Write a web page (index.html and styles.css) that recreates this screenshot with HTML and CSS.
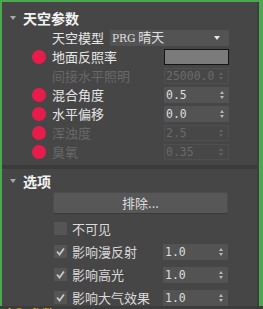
FILE: index.html
```html
<!DOCTYPE html>
<html lang="zh">
<head>
<meta charset="utf-8">
<link rel="stylesheet" href="styles.css">
</head>
<body>
<div class="frame">
  <div class="panel">
    <section class="rollout first">
      <div class="rhead"><span class="tri"></span><span>天空参数</span></div>
      <div class="row">
        <span class="nodot"></span><span class="label">天空模型</span>
        <div class="dropdown"><span class="ddtext"><span class="latin">PRG</span> 晴天</span><span class="ddarrow"></span></div>
      </div>
      <div class="row">
        <span class="dot"></span><span class="label">地面反照率</span>
        <div class="swatch"></div>
      </div>
      <div class="row">
        <span class="nodot"></span><span class="label off">间接水平照明</span>
        <div class="field off"><span class="num">25000.0</span><span class="spin"><i class="up"></i><i class="down"></i></span></div>
      </div>
      <div class="row">
        <span class="dot"></span><span class="label">混合角度</span>
        <div class="field"><span class="num">0.5</span><span class="spin"><i class="up"></i><i class="down"></i></span></div>
      </div>
      <div class="row">
        <span class="dot"></span><span class="label">水平偏移</span>
        <div class="field"><span class="num">0.0</span><span class="spin"><i class="up"></i><i class="down"></i></span></div>
      </div>
      <div class="row">
        <span class="dot"></span><span class="label off">浑浊度</span>
        <div class="field off"><span class="num">2.5</span><span class="spin"><i class="up"></i><i class="down"></i></span></div>
      </div>
      <div class="row">
        <span class="dot"></span><span class="label off">臭氧</span>
        <div class="field off"><span class="num">0.35</span><span class="spin"><i class="up"></i><i class="down"></i></span></div>
      </div>
    </section>
    <section class="rollout second">
      <div class="rhead"><span class="tri"></span><span>选项</span></div>
      <div class="btnrow"><button class="btn">排除...</button></div>
      <div class="crow">
        <span class="check"></span><span class="clabel">不可见</span>
      </div>
      <div class="crow">
        <span class="check on"><svg viewBox="0 0 13 13" width="13" height="13"><path d="M3 6.5 L5.5 9.5 L10 3.5" fill="none" stroke="#c8c8c8" stroke-width="1.8"/></svg></span><span class="clabel">影响漫反射</span>
        <div class="field"><span class="num">1.0</span><span class="spin"><i class="up"></i><i class="down"></i></span></div>
      </div>
      <div class="crow">
        <span class="check on"><svg viewBox="0 0 13 13" width="13" height="13"><path d="M3 6.5 L5.5 9.5 L10 3.5" fill="none" stroke="#c8c8c8" stroke-width="1.8"/></svg></span><span class="clabel">影响高光</span>
        <div class="field"><span class="num">1.0</span><span class="spin"><i class="up"></i><i class="down"></i></span></div>
      </div>
      <div class="crow">
        <span class="check on"><svg viewBox="0 0 13 13" width="13" height="13"><path d="M3 6.5 L5.5 9.5 L10 3.5" fill="none" stroke="#c8c8c8" stroke-width="1.8"/></svg></span><span class="clabel">影响大气效果</span>
        <div class="field"><span class="num">1.0</span><span class="spin"><i class="up"></i><i class="down"></i></span></div>
      </div>
    </section>
  </div>
</div>
<div class="below">太阳参数</div>
</body>
</html>
```
FILE: styles.css
```css
html, body {
  margin: 0;
  padding: 0;
}
body {
  width: 263px;
  height: 309px;
  overflow: hidden;
  background: #3c3c3c;
  font-family: "Noto Sans CJK SC", "Noto Sans", sans-serif;
}
.frame {
  box-sizing: border-box;
  height: 306px;
  border-top: 2px solid #4ba851;
  border-left: 2px solid #4ba851;
  border-right: 4px solid #4ba851;
  overflow: hidden;
  background: #464646;
}
.panel {
  box-sizing: border-box;
  height: 100%;
  border-right: 2px solid #3d3d3d;
}
.rollout.first {
  padding-top: 7px;
  padding-bottom: 4px;
  border-bottom: 4px solid #3b3b3b;
}
.rollout.second {
  padding-top: 3px;
}
.rhead {
  height: 19px;
  display: flex;
  align-items: center;
  padding-left: 8px;
  color: #f2f2f2;
  font-size: 14px;
  font-weight: bold;
  line-height: 19px;
}
.tri {
  width: 0;
  height: 0;
  border-left: 3px solid transparent;
  border-right: 3px solid transparent;
  border-top: 4px solid #a8a8a8;
  margin-right: 7px;
  margin-top: -2px;
}
.row {
  height: 19px;
  display: flex;
  align-items: center;
  padding-left: 30px;
  padding-right: 28px;
}
.dot, .nodot {
  width: 14px;
  height: 14px;
  flex: none;
  margin-right: 6px;
  border-radius: 50%;
}
.dot {
  background: #e81c4b;
}
.label {
  color: #e6e6e6;
  font-size: 13px;
  line-height: 19px;
  white-space: nowrap;
}
.label.off {
  color: #686868;
}
.dropdown {
  margin-left: auto;
  width: 119px;
  height: 16px;
  box-sizing: border-box;
  background: #535353;
  display: flex;
  align-items: center;
  padding-left: 2px;
  padding-right: 9px;
  color: #e0e0e0;
  font-size: 13px;
}
.latin {
  font-family: "DejaVu Serif", serif;
  font-size: 10.5px;
}
.ddtext {
  white-space: nowrap;
  line-height: 16px;
}
.ddarrow {
  margin-left: auto;
  width: 0;
  height: 0;
  border-left: 3px solid transparent;
  border-right: 3px solid transparent;
  border-top: 4px solid #e8e8e8;
}
.swatch {
  margin-left: auto;
  width: 65px;
  height: 16px;
  box-sizing: border-box;
  background: #7b7b7b;
  border: 1px solid #141414;
}
.field {
  margin-left: auto;
  width: 65px;
  height: 16px;
  box-sizing: border-box;
  background: #535353;
  display: flex;
  align-items: center;
  padding-left: 2px;
  padding-right: 5px;
}
.field.off {
  background: #474747;
  border: 1px solid #4f4f4f;
  padding-left: 1px;
}
.num {
  font-family: "DejaVu Sans Mono", monospace;
  font-size: 11.5px;
  color: #dedede;
  line-height: 16px;
}
.field.off .num {
  color: #6a6a6a;
}
.spin {
  margin-left: auto;
  display: flex;
  flex-direction: column;
  gap: 2px;
}
.spin i {
  display: block;
  width: 0;
  height: 0;
  border-left: 2.5px solid transparent;
  border-right: 2.5px solid transparent;
}
.spin .up {
  border-bottom: 3px solid #b8b8b8;
}
.spin .down {
  border-top: 3px solid #b8b8b8;
}
.field.off .spin .up {
  border-bottom-color: #626262;
}
.field.off .spin .down {
  border-top-color: #626262;
}
.btnrow {
  padding-left: 51px;
  padding-right: 29px;
  margin-top: 1px;
  margin-bottom: 3px;
}
.btn {
  display: block;
  width: 100%;
  height: 22px;
  background: #575757;
  border: 1px solid #4c4c4c;
  border-bottom-color: #3a3a3a;
  border-radius: 2px;
  color: #dcdcdc;
  font-family: "Noto Sans CJK SC", "Noto Sans", sans-serif;
  font-size: 13px;
  padding: 0;
  line-height: 20px;
}
.crow {
  height: 23px;
  display: flex;
  align-items: center;
  padding-left: 52px;
  padding-right: 29px;
}
.check {
  width: 13px;
  height: 13px;
  flex: none;
  background: #555555;
  margin-right: 5px;
  display: flex;
}
.clabel {
  color: #dadada;
  font-size: 13px;
  line-height: 19px;
  white-space: nowrap;
}
.below {
  padding-left: 3px;
  color: #f0c010;
  font-size: 13px;
  font-weight: bold;
  line-height: 14px;
  margin-top: 1px;
}
```
